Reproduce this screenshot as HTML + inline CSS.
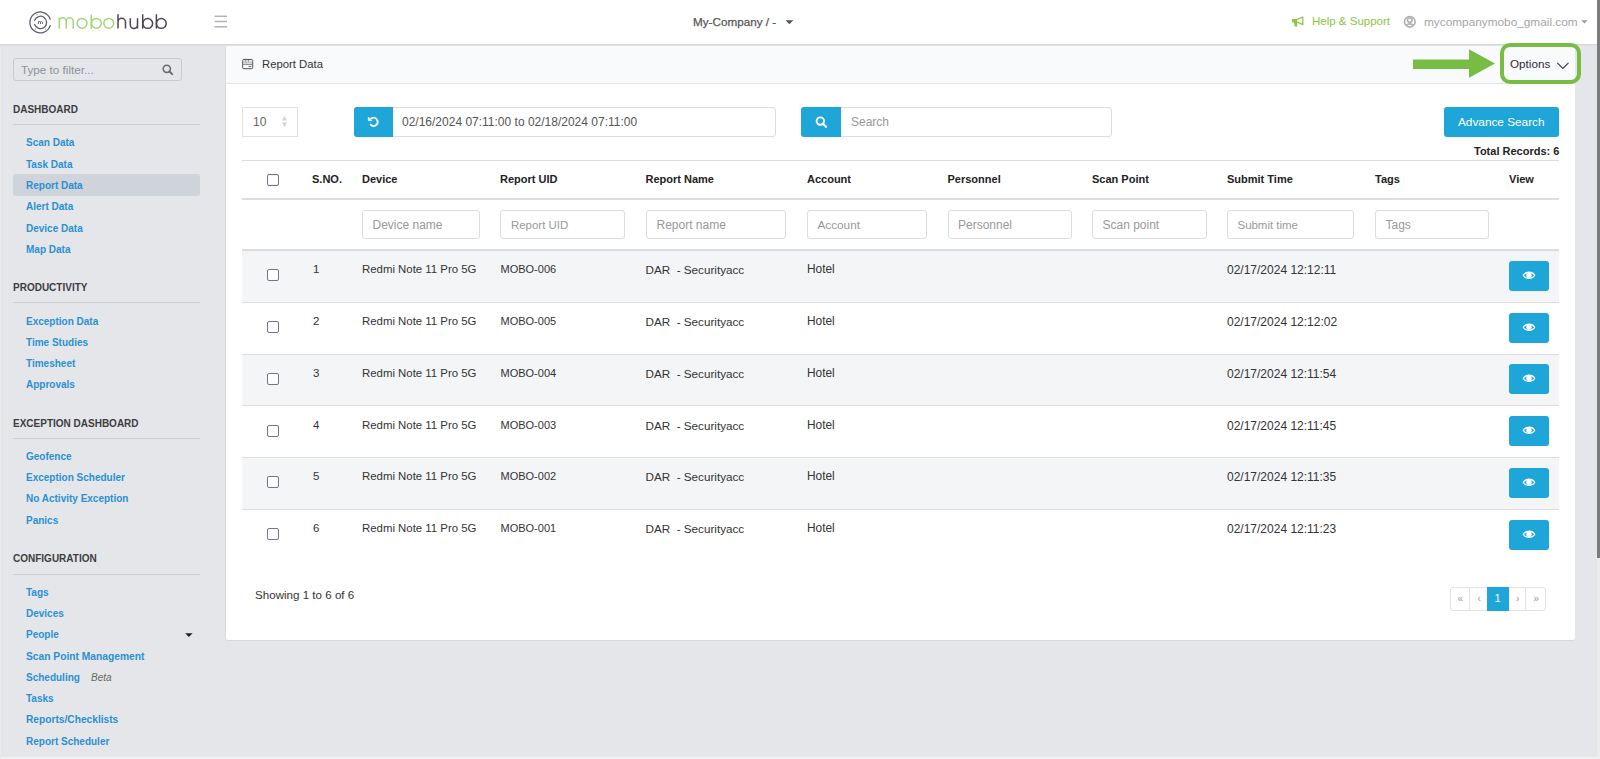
<!DOCTYPE html>
<html><head><meta charset="utf-8">
<style>
*{box-sizing:border-box;margin:0;padding:0}
html,body{width:1600px;height:759px;overflow:hidden}
body{position:relative;background:#e5e6e9;font-family:"Liberation Sans",sans-serif;color:#333}
.a{position:absolute;white-space:nowrap}
#hdr{position:absolute;left:0;top:0;width:1597px;height:44px;background:#fff;border-bottom:1px solid #d6d7db;height:45px}
#sb{position:absolute;left:1597px;top:0;width:3px;height:759px;background:#ececec}
#sbt{position:absolute;left:1597px;top:0;width:3px;height:558px;background:#7b7b7b}
#btm{position:absolute;left:0;top:757px;width:1597px;height:2px;background:#eff0f2}
/* sidebar */
.sec{position:absolute;left:13px;font-size:10px;font-weight:700;color:#3d3d3f;white-space:nowrap}
.secl{position:absolute;left:13px;width:187px;height:1px;background:#cdced2}
.it{position:absolute;left:26px;font-size:10px;font-weight:700;color:#2a90d2;white-space:nowrap;line-height:12px}
/* panel */
#panel{position:absolute;left:226px;top:46px;width:1349px;height:594px;background:#fff;border-radius:2px;box-shadow:0 1px 0 #d9dadd,-1px 0 0 #d9dadc}
#ph{position:absolute;left:0;top:0;width:1349px;height:38px;background:#f9fafc;border-bottom:1px solid #e1e2e6;border-radius:2px 2px 0 0}
.inp{position:absolute;border:1px solid #dcdde0;border-radius:3px;background:#fff}
.btnb{position:absolute;background:#1fa6d9}
.th{position:absolute;font-size:11px;font-weight:700;color:#222;white-space:nowrap;line-height:12px}
.ph{position:absolute;font-size:12px;color:#999;white-space:nowrap;line-height:14px}
.row{position:absolute;left:242px;width:1317px}
.td{position:absolute;font-size:12px;color:#333;white-space:nowrap;line-height:14px}
.cb{position:absolute;left:25px;width:11.5px;height:11.5px;border:1.6px solid #75728a;border-radius:2px;background:#fff}
.vb{position:absolute;left:1267px;top:11px;width:40px;height:30px;background:#1fa6d9;border-radius:3px}
.hl{position:absolute;left:242px;width:1317px;background:#dcdde1}
</style></head><body>

<div id="hdr"></div><div class="a" style="left:0;top:45px;width:1597px;height:1px;background:#dfe0e3"></div>
<div id="btm"></div><div class="a" style="left:0;top:46px;width:1px;height:713px;background:#eaebed"></div>
<div id="sb"></div><div id="sbt"></div>

<!-- logo -->
<svg class="a" style="left:0;top:0" width="240" height="44" viewBox="0 0 240 44">
 <g fill="none" stroke="#625d6e" stroke-width="1.3" stroke-linecap="round">
  <path d="M50.2 19.2 A10.4 10.4 0 1 0 50.2 25.6"/>
  <path d="M34.6 20.3 A6.2 6.2 0 1 1 34.6 24.6"/>
 </g>
 <path d="M38.4 24V21.6 M38.4 22.6A1.05 1.05 0 0 1 40.5 22.6V24 M40.5 22.6A1.05 1.05 0 0 1 42.6 22.6V24" fill="none" stroke="#5a5566" stroke-width="0.9"/>
 <g fill="#9dd36b"><circle cx="37.2" cy="14.7" r="0.8"/><circle cx="35.3" cy="29.1" r="0.8"/><circle cx="45.7" cy="29.1" r="0.8"/></g>
 <g fill="none" stroke="#a0d572" stroke-width="1.45">
  <path d="M59.2 28.8 V17.8 M59.2 21.5 A3.5 3.7 0 0 1 66.2 21.5 V28.8 M66.2 21.5 A3.5 3.7 0 0 1 73.2 21.5 V28.8"/>
  <circle cx="82.1" cy="23.3" r="4.9"/>
  <path d="M91.2 28.8 V14.4"/><circle cx="96.4" cy="23.3" r="4.9"/>
  <circle cx="108.7" cy="23.3" r="4.9"/>
 </g>
 <g fill="none" stroke="#4b4459" stroke-width="1.5">
  <path d="M118 28.6 V14.3 M118 22.3 A3.75 4 0 0 1 125.5 22.3 V28.6"/>
  <path d="M130.3 18.3 V24.6 A3.6 4 0 0 0 137.5 24.6 V18.3 M137.5 24 V28.6"/>
  <path d="M142.7 28.6 V14.3"/><circle cx="147.7" cy="23.45" r="4.9"/>
  <path d="M156.4 28.6 V14.3"/><circle cx="161.3" cy="23.45" r="4.9"/>
 </g>
 <g stroke="#b3b3b3" stroke-width="1.4"><path d="M214.6 16.3H227M214.6 21.5H227M214.6 26.7H227"/></g>
</svg>

<div class="a" style="left:693px;top:14.5px;font-size:11.7px;color:#555;line-height:14px;-webkit-text-stroke:0.25px #555">My-Company / -</div>
<svg class="a" style="left:785px;top:20px" width="9" height="5"><path d="M0.5 0.2H8.3L4.4 4.2Z" fill="#555"/></svg>

<svg class="a" style="left:1290px;top:14px" width="16" height="14" viewBox="0 0 16 14">
 <path d="M2 5H7.3V8.3H2Z" fill="#8dc642"/><path d="M3.9 8H7.1L7.3 12.5H4.8Z" fill="#8dc642"/>
 <path d="M7.3 5.4L12.8 3V10.6L7.3 8.1" fill="none" stroke="#8dc642" stroke-width="1.25" stroke-linejoin="round"/>
</svg>
<div class="a" style="left:1312px;top:14px;font-size:11.5px;color:#8cc63f;line-height:14px">Help &amp; Support</div>
<svg class="a" style="left:1402px;top:14px" width="16" height="16" viewBox="0 0 16 16">
 <circle cx="7.8" cy="7.8" r="5.3" fill="none" stroke="#b0b0b0" stroke-width="1.6"/>
 <circle cx="7.8" cy="6.1" r="2.3" fill="none" stroke="#b0b0b0" stroke-width="1.6"/>
 <path d="M4.3 11.4 Q7.8 8.5 11.3 11.4" fill="none" stroke="#b0b0b0" stroke-width="1.7"/>
</svg>
<div class="a" style="left:1424px;top:14.5px;font-size:11.82px;color:#a5a5a5;line-height:14px">mycompanymobo_gmail.com</div>
<svg class="a" style="left:1581px;top:20px" width="7" height="4"><path d="M0.3 0.3H6.5L3.4 3.5Z" fill="#999"/></svg>

<!-- sidebar -->
<div class="a" style="left:13px;top:58px;width:169px;height:23px;border:1px solid #c9cacd;border-radius:3px"></div>
<div class="a" style="left:21px;top:63px;font-size:11.7px;color:#8d929b;line-height:14px">Type to filter...</div>
<svg class="a" style="left:161px;top:63px" width="14" height="14" viewBox="0 0 14 14">
 <circle cx="5.8" cy="5.8" r="3.6" fill="none" stroke="#6a6a6a" stroke-width="1.6"/><path d="M8.5 8.5L11.2 11.2" stroke="#6a6a6a" stroke-width="1.9" stroke-linecap="round"/>
</svg>

<div class="sec" style="top:104px">DASHBOARD</div>
<div class="secl" style="top:124px"></div>
<div class="a" style="left:13px;top:174px;width:187px;height:21.5px;background:#cfd3da;border-radius:3px"></div>
<div class="it" style="top:137px">Scan Data</div>
<div class="it" style="top:158.5px">Task Data</div>
<div class="it" style="top:180px">Report Data</div>
<div class="it" style="top:201px">Alert Data</div>
<div class="it" style="top:222.5px">Device Data</div>
<div class="it" style="top:244px">Map Data</div>

<div class="sec" style="top:282px">PRODUCTIVITY</div>
<div class="secl" style="top:302px"></div>
<div class="it" style="top:315.5px">Exception Data</div>
<div class="it" style="top:336.5px">Time Studies</div>
<div class="it" style="top:358px">Timesheet</div>
<div class="it" style="top:379px">Approvals</div>

<div class="sec" style="top:418px">EXCEPTION DASHBOARD</div>
<div class="secl" style="top:438px"></div>
<div class="it" style="top:450.5px">Geofence</div>
<div class="it" style="top:472px">Exception Scheduler</div>
<div class="it" style="top:493px">No Activity Exception</div>
<div class="it" style="top:514.5px">Panics</div>

<div class="sec" style="top:553px">CONFIGURATION</div>
<div class="secl" style="top:574px"></div>
<div class="it" style="top:586.5px">Tags</div>
<div class="it" style="top:607.5px">Devices</div>
<div class="it" style="top:629px">People</div>
<svg class="a" style="left:185px;top:633px" width="8" height="5"><path d="M0.2 0.3H7.6L3.9 4Z" fill="#222"/></svg>
<div class="it" style="top:651px;font-size:10.25px">Scan Point Management</div>
<div class="it" style="top:672px">Scheduling</div>
<div class="a" style="left:91px;top:672px;font-size:10px;font-style:italic;color:#666;line-height:12px">Beta</div>
<div class="it" style="top:693px">Tasks</div>
<div class="it" style="top:714px;font-size:10.2px">Reports/Checklists</div>
<div class="it" style="top:736px">Report Scheduler</div>

<!-- panel -->
<div id="panel">
 <div id="ph"></div>
</div>

<svg class="a" style="left:241px;top:58px" width="13" height="12" viewBox="0 0 13 12">
 <rect x="1.7" y="1.4" width="10" height="9.3" rx="1.1" fill="#fff" stroke="#4a4a52" stroke-width="1"/>
 <path d="M2.2 3H11.2" stroke="#c9cdd6" stroke-width="1.2"/>
 <path d="M4.6 2.2V3.8M7.4 2.2V3.8" stroke="#6b6b78" stroke-width="0.8"/>
 <path d="M2.2 4.8H11.2" stroke="#a9a9b0" stroke-width="0.9"/>
 <path d="M2.2 6.4H11.2" stroke="#6f6f78" stroke-width="0.9"/>
 <path d="M4.9 4.3V6.9" stroke="#b8b89a" stroke-width="0.7"/>
 <path d="M7.6 8.4H10.3" stroke="#55556a" stroke-width="1"/>
</svg>
<div class="a" style="left:262px;top:57px;font-size:11.3px;color:#333;line-height:14px">Report Data</div>

<!-- options -->
<div class="a" style="left:1502px;top:46px;width:1px;height:37px;background:#e4e5e8"></div>
<svg class="a" style="left:1410px;top:45px" width="90" height="36" viewBox="0 0 90 36">
 <path d="M3 14.4H59V4.3L85 18.5L59 32.8V23.9H3Z" fill="#77bd43"/>
</svg>
<div class="a" style="left:1500px;top:43px;width:81px;height:41px;border:4.5px solid #77bd43;border-radius:10px"></div>
<div class="a" style="left:1510px;top:57px;font-size:11.7px;color:#2c2c3a;line-height:14px">Options</div>
<svg class="a" style="left:1556px;top:61px" width="14" height="10"><path d="M1.3 1.8L6.9 7.5L12.5 1.8" fill="none" stroke="#3a3a48" stroke-width="1.1"/></svg>

<!-- toolbar -->
<div class="inp" style="left:242px;top:107px;width:56px;height:30px;border-color:#e0e0e0;border-radius:0"></div>
<div class="a" style="left:253px;top:115px;font-size:12px;color:#666;line-height:14px">10</div>
<svg class="a" style="left:280px;top:114px" width="9" height="15" viewBox="0 0 9 15"><path d="M4.5 2L7 6.6H2Z M4.5 13L7 8.4H2Z" fill="#d4d4d4"/></svg>

<div class="inp" style="left:354px;top:107px;width:422px;height:30px"></div>
<div class="btnb" style="left:354px;top:107px;width:39px;height:30px;border-radius:3px 0 0 3px"></div>
<svg class="a" style="left:364px;top:112px" width="20" height="20" viewBox="0 0 20 20">
 <path d="M7.3 6.5 A4.05 4.05 0 1 1 6.6 12.7" fill="none" stroke="#fff" stroke-width="1.8" stroke-linecap="round"/>
 <path d="M4.3 5.1V8.7H7.9Z" fill="#fff" stroke="#fff" stroke-width="0.6" stroke-linejoin="round"/>
</svg>
<div class="a" style="left:402px;top:115px;font-size:12px;color:#555;line-height:14px">02/16/2024 07:11:00 to 02/18/2024 07:11:00</div>

<div class="inp" style="left:801px;top:107px;width:311px;height:30px"></div>
<div class="btnb" style="left:801px;top:107px;width:40px;height:30px;border-radius:3px 0 0 3px"></div>
<svg class="a" style="left:811px;top:112px" width="20" height="20" viewBox="0 0 20 20">
 <circle cx="9.3" cy="9.1" r="3.7" fill="none" stroke="#fff" stroke-width="1.9"/><path d="M12 11.8L15 14.8" stroke="#fff" stroke-width="2.1" stroke-linecap="round"/>
</svg>
<div class="a" style="left:851px;top:115px;font-size:12px;color:#999;line-height:14px">Search</div>

<div class="btnb" style="left:1444px;top:107px;width:115px;height:30px;border-radius:3px"></div>
<div class="a" style="left:1458px;top:115px;font-size:11.8px;color:#fff;line-height:14px">Advance Search</div>
<div class="a" style="left:1474px;top:144.5px;font-size:11px;font-weight:700;color:#222;line-height:12px">Total Records: 6</div>

<!-- table header -->
<div class="hl" style="top:160px;height:1px"></div>
<div class="hl" style="top:198px;height:2px"></div>
<div class="hl" style="top:249px;height:2px"></div>
<div class="cb" style="left:267px;top:174px"></div>
<div class="th" style="left:312px;top:173px">S.NO.</div>
<div class="th" style="left:362px;top:173px">Device</div>
<div class="th" style="left:500px;top:173px">Report UID</div>
<div class="th" style="left:645.5px;top:173px">Report Name</div>
<div class="th" style="left:807px;top:173px">Account</div>
<div class="th" style="left:947.5px;top:173px">Personnel</div>
<div class="th" style="left:1092px;top:173px">Scan Point</div>
<div class="th" style="left:1227px;top:173px">Submit Time</div>
<div class="th" style="left:1375px;top:173px">Tags</div>
<div class="th" style="left:1509px;top:173px">View</div>

<div class="inp" style="left:362px;top:210px;width:118px;height:29px"></div>
<div class="inp" style="left:500px;top:210px;width:125px;height:29px"></div>
<div class="inp" style="left:645.5px;top:210px;width:140.5px;height:29px"></div>
<div class="inp" style="left:807px;top:210px;width:120px;height:29px"></div>
<div class="inp" style="left:947.5px;top:210px;width:124.5px;height:29px"></div>
<div class="inp" style="left:1092px;top:210px;width:114.5px;height:29px"></div>
<div class="inp" style="left:1227px;top:210px;width:127px;height:29px"></div>
<div class="inp" style="left:1375px;top:210px;width:114px;height:29px"></div>
<div class="ph" style="left:372.5px;top:218px">Device name</div>
<div class="ph" style="left:511px;top:218px;font-size:11.45px">Report UID</div>
<div class="ph" style="left:656.5px;top:218px">Report name</div>
<div class="ph" style="left:817.5px;top:218px;font-size:11.75px">Account</div>
<div class="ph" style="left:958px;top:218px">Personnel</div>
<div class="ph" style="left:1102.5px;top:218px">Scan point</div>
<div class="ph" style="left:1237.5px;top:218px;font-size:11.45px">Submit time</div>
<div class="ph" style="left:1385.5px;top:218px">Tags</div>

<!-- rows -->
<!--rows-->
<div class="row" style="top:251px;height:51px;background:#f4f5f7"></div>
<div class="hl" style="top:302px;height:1px"></div>
<div class="cb" style="left:267px;top:269px"></div>
<div class="td" style="left:313px;top:262px;font-size:11.5px">1</div>
<div class="td" style="left:362px;top:262px;font-size:11.4px">Redmi Note 11 Pro 5G</div>
<div class="td" style="left:500.5px;top:262px;font-size:11px">MOBO-006</div>
<div class="td" style="left:645.5px;top:263px;font-size:11.7px;color:#333">DAR &nbsp;- Securityacc</div>
<div class="td" style="left:807px;top:262px;font-size:11.9px">Hotel</div>
<div class="td" style="left:1227px;top:263px;font-size:12px">02/17/2024 12:12:11</div>
<div class="vb" style="left:1509px;top:261px"></div>
<svg class="a" style="left:1521px;top:269px" width="16" height="12" viewBox="0 0 16 12"><path d="M2.3 6.3C4.5 2.2 11.5 2.2 13.7 6.3C11.5 10.4 4.5 10.4 2.3 6.3Z" fill="none" stroke="#fff" stroke-width="1.3"/><circle cx="8" cy="6.2" r="2.7" fill="#fff"/></svg>
<div class="hl" style="top:354px;height:1px"></div>
<div class="cb" style="left:267px;top:321px"></div>
<div class="td" style="left:313px;top:314px;font-size:11.5px">2</div>
<div class="td" style="left:362px;top:314px;font-size:11.4px">Redmi Note 11 Pro 5G</div>
<div class="td" style="left:500.5px;top:314px;font-size:11px">MOBO-005</div>
<div class="td" style="left:645.5px;top:315px;font-size:11.7px;color:#333">DAR &nbsp;- Securityacc</div>
<div class="td" style="left:807px;top:314px;font-size:11.9px">Hotel</div>
<div class="td" style="left:1227px;top:315px;font-size:12px">02/17/2024 12:12:02</div>
<div class="vb" style="left:1509px;top:313px"></div>
<svg class="a" style="left:1521px;top:321px" width="16" height="12" viewBox="0 0 16 12"><path d="M2.3 6.3C4.5 2.2 11.5 2.2 13.7 6.3C11.5 10.4 4.5 10.4 2.3 6.3Z" fill="none" stroke="#fff" stroke-width="1.3"/><circle cx="8" cy="6.2" r="2.7" fill="#fff"/></svg>
<div class="row" style="top:355px;height:50px;background:#f4f5f7"></div>
<div class="hl" style="top:405px;height:1px"></div>
<div class="cb" style="left:267px;top:373px"></div>
<div class="td" style="left:313px;top:366px;font-size:11.5px">3</div>
<div class="td" style="left:362px;top:366px;font-size:11.4px">Redmi Note 11 Pro 5G</div>
<div class="td" style="left:500.5px;top:366px;font-size:11px">MOBO-004</div>
<div class="td" style="left:645.5px;top:367px;font-size:11.7px;color:#333">DAR &nbsp;- Securityacc</div>
<div class="td" style="left:807px;top:366px;font-size:11.9px">Hotel</div>
<div class="td" style="left:1227px;top:367px;font-size:12px">02/17/2024 12:11:54</div>
<div class="vb" style="left:1509px;top:364px"></div>
<svg class="a" style="left:1521px;top:372px" width="16" height="12" viewBox="0 0 16 12"><path d="M2.3 6.3C4.5 2.2 11.5 2.2 13.7 6.3C11.5 10.4 4.5 10.4 2.3 6.3Z" fill="none" stroke="#fff" stroke-width="1.3"/><circle cx="8" cy="6.2" r="2.7" fill="#fff"/></svg>
<div class="hl" style="top:457px;height:1px"></div>
<div class="cb" style="left:267px;top:425px"></div>
<div class="td" style="left:313px;top:418px;font-size:11.5px">4</div>
<div class="td" style="left:362px;top:418px;font-size:11.4px">Redmi Note 11 Pro 5G</div>
<div class="td" style="left:500.5px;top:418px;font-size:11px">MOBO-003</div>
<div class="td" style="left:645.5px;top:419px;font-size:11.7px;color:#333">DAR &nbsp;- Securityacc</div>
<div class="td" style="left:807px;top:418px;font-size:11.9px">Hotel</div>
<div class="td" style="left:1227px;top:419px;font-size:12px">02/17/2024 12:11:45</div>
<div class="vb" style="left:1509px;top:416px"></div>
<svg class="a" style="left:1521px;top:424px" width="16" height="12" viewBox="0 0 16 12"><path d="M2.3 6.3C4.5 2.2 11.5 2.2 13.7 6.3C11.5 10.4 4.5 10.4 2.3 6.3Z" fill="none" stroke="#fff" stroke-width="1.3"/><circle cx="8" cy="6.2" r="2.7" fill="#fff"/></svg>
<div class="row" style="top:458px;height:51px;background:#f4f5f7"></div>
<div class="hl" style="top:509px;height:1px"></div>
<div class="cb" style="left:267px;top:476px"></div>
<div class="td" style="left:313px;top:469px;font-size:11.5px">5</div>
<div class="td" style="left:362px;top:469px;font-size:11.4px">Redmi Note 11 Pro 5G</div>
<div class="td" style="left:500.5px;top:469px;font-size:11px">MOBO-002</div>
<div class="td" style="left:645.5px;top:470px;font-size:11.7px;color:#333">DAR &nbsp;- Securityacc</div>
<div class="td" style="left:807px;top:469px;font-size:11.9px">Hotel</div>
<div class="td" style="left:1227px;top:470px;font-size:12px">02/17/2024 12:11:35</div>
<div class="vb" style="left:1509px;top:468px"></div>
<svg class="a" style="left:1521px;top:476px" width="16" height="12" viewBox="0 0 16 12"><path d="M2.3 6.3C4.5 2.2 11.5 2.2 13.7 6.3C11.5 10.4 4.5 10.4 2.3 6.3Z" fill="none" stroke="#fff" stroke-width="1.3"/><circle cx="8" cy="6.2" r="2.7" fill="#fff"/></svg>
<div class="cb" style="left:267px;top:528px"></div>
<div class="td" style="left:313px;top:521px;font-size:11.5px">6</div>
<div class="td" style="left:362px;top:521px;font-size:11.4px">Redmi Note 11 Pro 5G</div>
<div class="td" style="left:500.5px;top:521px;font-size:11px">MOBO-001</div>
<div class="td" style="left:645.5px;top:522px;font-size:11.7px;color:#333">DAR &nbsp;- Securityacc</div>
<div class="td" style="left:807px;top:521px;font-size:11.9px">Hotel</div>
<div class="td" style="left:1227px;top:522px;font-size:12px">02/17/2024 12:11:23</div>
<div class="vb" style="left:1509px;top:520px"></div>
<svg class="a" style="left:1521px;top:528px" width="16" height="12" viewBox="0 0 16 12"><path d="M2.3 6.3C4.5 2.2 11.5 2.2 13.7 6.3C11.5 10.4 4.5 10.4 2.3 6.3Z" fill="none" stroke="#fff" stroke-width="1.3"/><circle cx="8" cy="6.2" r="2.7" fill="#fff"/></svg>
<!--/rows-->

<div class="a" style="left:255px;top:588px;font-size:11.6px;color:#333;line-height:14px">Showing 1 to 6 of 6</div>

<!-- pagination -->
<div class="a" style="left:1450px;top:587px;width:96px;height:24px;border:1px solid #e3e3e3;border-radius:3px;background:#fff"></div>
<div class="a" style="left:1469px;top:587px;width:1px;height:24px;background:#e3e3e3"></div>
<div class="a" style="left:1525px;top:587px;width:1px;height:24px;background:#e3e3e3"></div>
<div class="a" style="left:1487px;top:587px;width:22px;height:24px;background:#1fa6d9"></div>
<div class="a" style="left:1457.5px;top:593px;font-size:10px;color:#999;line-height:12px">«</div>
<div class="a" style="left:1477.5px;top:593px;font-size:10px;color:#999;line-height:12px">‹</div>
<div class="a" style="left:1494.5px;top:592px;font-size:11px;color:#fff;line-height:12px">1</div>
<div class="a" style="left:1516px;top:593px;font-size:10px;color:#999;line-height:12px">›</div>
<div class="a" style="left:1533.5px;top:593px;font-size:10px;color:#999;line-height:12px">»</div>

</body></html>
